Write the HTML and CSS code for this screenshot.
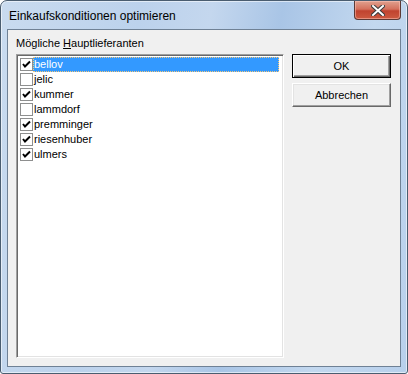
FILE: index.html
```html
<!DOCTYPE html>
<html lang="de">
<head>
    <meta charset="UTF-8">
    <title>Einkaufskonditionen optimieren</title>
    <link rel="stylesheet" href="styles.css">
</head>
<body>
    <div class="window">
        <div class="titlebar">
            <span class="title">Einkaufskonditionen optimieren</span>
            <div class="close-btn">
                <svg width="14" height="11" viewBox="0 0 14 11">
                    <path d="M2 1 L12 10 M12 1 L2 10" stroke="#3b3b3b" stroke-width="4" stroke-linecap="square"/>
                    <path d="M2 1 L12 10 M12 1 L2 10" stroke="#ffffff" stroke-width="2" stroke-linecap="square"/>
                </svg>
            </div>
        </div>
        <div class="client">
            <div class="left-col">
                <div class="list-label">Mögliche <u>H</u>auptlieferanten</div>
                <div class="listbox">
                    <!-- Lieferanten mit Auswahl -->
                    <div class="item selected"><span class="chk checked"></span><span class="name">bellov</span></div>
                    <div class="item"><span class="chk"></span><span class="name">jelic</span></div>
                    <div class="item"><span class="chk checked"></span><span class="name">kummer</span></div>
                    <div class="item"><span class="chk"></span><span class="name">lammdorf</span></div>
                    <div class="item"><span class="chk checked"></span><span class="name">premminger</span></div>
                    <div class="item"><span class="chk checked"></span><span class="name">riesenhuber</span></div>
                    <div class="item"><span class="chk checked"></span><span class="name">ulmers</span></div>
                </div>
            </div>
            <div class="right-col">
                <button class="btn default">OK</button>
                <button class="btn">Abbrechen</button>
            </div>
        </div>
    </div>
</body>
</html>
```

FILE: styles.css
```css
body {
    margin: 0;
    padding: 0;
    font-family: "Liberation Sans", Arial, sans-serif;
    font-size: 11px;
    background-color: #ffffff;
}
.window {
    box-sizing: border-box;
    width: 408px;
    height: 374px;
    border: 1px solid #4a5d70;
    border-radius: 7px 7px 3px 3px;
    padding: 0 6px 6px 6px;
    display: flex;
    flex-direction: column;
    background: linear-gradient(100deg, #c9dbef 0%, #bcd2ec 30%, #c4d7ee 45%, #a9c5e6 60%, #c3d8ef 80%, #b8d0ec 100%);
    box-shadow: inset 0 0 0 1px rgba(255,255,255,0.55);
}
.titlebar {
    height: 28px;
    display: flex;
    align-items: flex-start;
    padding-left: 2px;
}
.title {
    font-size: 12px;
    color: #000;
    margin-top: 8px;
}
.close-btn {
    margin-left: auto;
    width: 45px;
    height: 18px;
    border: 1px solid #5b3a36;
    border-top: none;
    border-radius: 0 0 4px 4px;
    background: linear-gradient(#e0a18f 0%, #d4715d 45%, #c0432f 55%, #cc5a40 100%);
    display: flex;
    align-items: center;
    justify-content: center;
    box-shadow: inset 0 0 0 1px rgba(255,200,190,0.5);
}
.client {
    flex: 1;
    display: flex;
    background-color: #f0f0f0;
    border: 1px solid #6f8195;
    padding: 7px 9px 8px 8px;
}
.left-col {
    display: flex;
    flex-direction: column;
    width: 268px;
}
.list-label {
    line-height: 13px;
    margin-bottom: 4px;
    color: #000;
}
.listbox {
    flex: 1;
    background-color: #fff;
    border-top: 1px solid #a0a0a0;
    border-left: 1px solid #a0a0a0;
    border-right: 1px solid #fff;
    border-bottom: 1px solid #fff;
    box-shadow: inset 1px 1px 0 #696969, inset -1px -1px 0 #e3e3e3;
    padding: 2px 4px 2px 2px;
}
.item {
    display: flex;
    align-items: center;
    height: 15px;
    padding-left: 1px;
}
.chk {
    box-sizing: border-box;
    width: 13px;
    height: 13px;
    border: 1px solid #8e8f8f;
    background: #fff;
    flex-shrink: 0;
}
.chk.checked {
    background: #fff url("data:image/svg+xml,%3Csvg xmlns='http://www.w3.org/2000/svg' width='11' height='11'%3E%3Cpath d='M2 5 L4 7.5 L9 2.5' fill='none' stroke='%23000' stroke-width='2'/%3E%3C/svg%3E") no-repeat center;
}
.name {
    flex: 1;
    height: 15px;
    line-height: 15px;
    padding-left: 1px;
    color: #000;
}
.item.selected .name {
    background-color: #3399ff;
    color: #fff;
    outline: 1px dotted #f5c87a;
    outline-offset: -1px;
}
.right-col {
    display: flex;
    flex-direction: column;
    margin-left: 8px;
    padding-top: 17px;
    gap: 5px;
}
.btn {
    box-sizing: border-box;
    width: 99px;
    height: 24px;
    font-family: "Liberation Sans", Arial, sans-serif;
    font-size: 11px;
    color: #000;
    background-color: #f0f0f0;
    border: 1px solid;
    border-color: #fff #696969 #696969 #fff;
    box-shadow: inset -1px -1px 0 #a0a0a0, inset 1px 1px 0 #e3e3e3;
    padding: 0;
}
.btn.default {
    border: 1px solid #000;
    box-shadow: inset 1px 1px 0 #fff, inset -1px -1px 0 #696969, inset -2px -2px 0 #a0a0a0;
}
```
